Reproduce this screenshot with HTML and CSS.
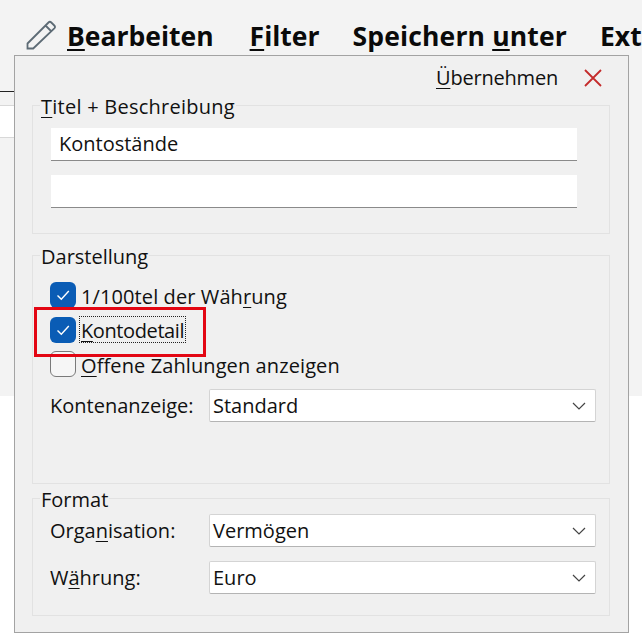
FILE: index.html
```html
<!DOCTYPE html>
<html lang="de">
<head>
<meta charset="utf-8">
<title>Kontostände</title>
<link rel="stylesheet" href="styles.css">
</head>
<body>
<div class="backdrop">
  <nav class="toolbar">
    <svg class="pencil" viewBox="0 0 30 31" aria-hidden="true"><path d="M1.5 24.5 22.5 3.5a2 2 0 0 1 2.8 0l3 3a2 2 0 0 1 0 2.8L7.2 29.5H1.5Z M19.5 6.5l5.5 5.5"/></svg>
    <span class="tool tool-edit"><u>B</u>earbeiten</span>
    <span class="tool tool-filter"><u>F</u>ilter</span>
    <span class="tool tool-save">Speichern <u>u</u>nter</span>
    <span class="tool tool-extra">Ext</span>
  </nav>
  <div class="stub">
    <div class="stub-row"></div>
  </div>
</div>
<section class="popup">
  <header class="popup-head">
    <span class="apply"><u>Ü</u>bernehmen</span>
    <svg class="close" viewBox="0 0 20 20" aria-hidden="true"><path d="M2 2 18 18M18 2 2 18"/></svg>
  </header>
  <fieldset class="group group-title">
    <legend><u>T</u>itel + Beschreibung</legend>
    <div class="input">Kontostände</div>
    <div class="input"></div>
  </fieldset>
  <fieldset class="group group-view">
    <legend>Darstellung</legend>
    <div class="check-list">
      <label class="check"><span class="box on"><svg viewBox="0 0 26 26" aria-hidden="true"><path d="M7.5 13.5 11.3 17.3 18.8 9"/></svg></span><span class="check-text">1/100tel der Wäh<u>r</u>ung</span></label>
      <label class="check"><span class="box on"><svg viewBox="0 0 26 26" aria-hidden="true"><path d="M7.5 13.5 11.3 17.3 18.8 9"/></svg></span><span class="check-text focus"><u>K</u>ontodetail</span></label>
      <label class="check"><span class="box"></span><span class="check-text"><u>O</u>ffene Zahlungen anzeigen</span></label>
    </div>
    <div class="field field-view">
      <span class="field-label">Kontenanzeige:</span>
      <div class="select"><span>Standard</span><svg viewBox="0 0 14 8" aria-hidden="true"><path d="M1 1 7 7 13 1"/></svg></div>
    </div>
  </fieldset>
  <fieldset class="group group-format">
    <legend>Format</legend>
    <div class="field">
      <span class="field-label">Orga<u>n</u>isation:</span>
      <div class="select"><span>Vermögen</span><svg viewBox="0 0 14 8" aria-hidden="true"><path d="M1 1 7 7 13 1"/></svg></div>
    </div>
    <div class="field">
      <span class="field-label">W<u>ä</u>hrung:</span>
      <div class="select"><span>Euro</span><svg viewBox="0 0 14 8" aria-hidden="true"><path d="M1 1 7 7 13 1"/></svg></div>
    </div>
  </fieldset>
  <div class="highlight"></div>
</section>
</body>
</html>
```

FILE: styles.css
```css
* { box-sizing: border-box; }
html, body { margin: 0; height: 100%; overflow: hidden; }
body {
  position: relative;
  width: 642px;
  height: 639px;
  background: #fff;
  color: #111;
  font-family: "Open Sans", "Liberation Sans", sans-serif;
  font-size: 20px;
}
u { text-underline-offset: 3px; text-decoration-thickness: 1px; }

.backdrop { height: 396px; background: #f3f3f3; }
.toolbar {
  display: flex;
  align-items: flex-start;
  height: 91px;
  padding: 18px 0 0 26px;
  white-space: nowrap;
}
.pencil { width: 30px; height: 31px; flex: none; margin-top: 1px; fill: none; stroke: #5d6b75; stroke-width: 1.8; }
.tool { font-size: 26.5px; font-weight: 700; line-height: 36px; color: #0a0a0a; }
.tool u { text-decoration-thickness: 2px; }
.tool-edit { margin-left: 11px; }
.tool-filter { margin-left: 36px; }
.tool-save { margin-left: 33px; letter-spacing: 0.15px; }
.tool-extra { margin-left: 33px; }

.stub { width: 14px; height: 47px; border-top: 1px solid #222; padding-top: 13px; }
.stub-row { height: 33px; background: #fff; border-top: 1px solid #d8d8d8; border-bottom: 1px solid #d8d8d8; }

.popup {
  position: absolute;
  left: 14px;
  top: 55px;
  width: 615px;
  height: 578px;
  padding: 0 18px 0 17px;
  background: #f0f0f0;
  border: 1.5px solid #a3a3a3;
}
.popup-head {
  display: flex;
  justify-content: flex-end;
  align-items: center;
  height: 36px;
  padding: 7px 7px 0 0;
  gap: 25px;
}
.apply { letter-spacing: -0.2px; }
.close { width: 20px; height: 20px; fill: none; stroke: #c42b2b; stroke-width: 1.8; }

.group {
  display: block;
  margin: 0;
  min-width: 0;
  border: 1.5px solid #e2e2e2;
  padding: 0 32px 0 18px;
}
.group legend { padding: 0 1px; margin-left: -11px; line-height: 29px; height: 26px; }
.group-title legend { letter-spacing: 0.25px; }
.group-title { height: 141.5px; }
.group-view { height: 241.5px; margin-top: 8.5px; padding-right: 13px; }
.group-format { height: 130.5px; margin-top: 1.5px; padding-right: 13px; }

.input {
  width: 526px;
  height: 33px;
  margin-top: 10px;
  padding-left: 8px;
  line-height: 31px;
  background: #fff;
  border-bottom: 1.5px solid #8a8a8a;
}
.input + .input { margin-top: 14px; }

.check-list { display: flex; flex-direction: column; gap: 8.5px; margin: 14px 0 0 -1px; }
.check { display: flex; align-items: center; gap: 3px; height: 26px; }
.box { width: 26px; height: 26px; flex: none; border: 1.5px solid #7a7a7a; border-radius: 6px; background: #f6f6f6; }
.box.on { border: 0; background: #0a5cb5; }
.box svg { display: block; width: 26px; height: 26px; fill: none; stroke: #fff; stroke-width: 1.4; }
.check-text { line-height: 23px; white-space: nowrap; padding: 2px 1px 0; border: 1px solid transparent; letter-spacing: 0.1px; }
.check-text.focus { border: 1px dotted #222; letter-spacing: -0.4px; }

.field { display: flex; align-items: center; margin: 0 0 14px -1px; }
.field-view { margin-top: 12px; }
.field-label { width: 159px; flex: none; white-space: nowrap; }
.select {
  display: flex;
  flex: none;
  justify-content: space-between;
  align-items: center;
  width: 387px;
  height: 33px;
  padding: 0 9px 0 3px;
  background: #fff;
  border: 1px solid #d4d4d4;
  border-bottom: 1.5px solid #b4b4b4;
  border-radius: 2px;
}
.select svg { width: 14px; height: 8px; fill: none; stroke: #444; stroke-width: 1.2; }
.group-format .field:first-of-type { margin-top: 3px; }

.highlight {
  position: absolute;
  left: 18.5px;
  top: 250.5px;
  width: 172px;
  height: 50px;
  border: 3.5px solid #e30613;
}
```
